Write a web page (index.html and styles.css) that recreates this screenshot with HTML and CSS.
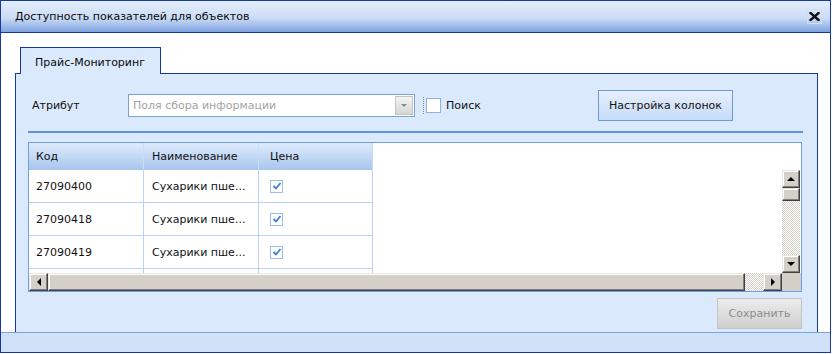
FILE: index.html
```html
<!DOCTYPE html>
<html lang="ru">
<head>
    <meta charset="UTF-8">
    <title>Доступность показателей для объектов</title>
    <link rel="stylesheet" href="styles.css">
</head>
<body>
    <div class="window">
        <div class="titlebar">
            <span class="title">Доступность показателей для объектов</span>
            <span class="close">
                <svg width="11" height="9" viewBox="0 0 11 9"><path d="M1.5 1 L9.5 8 M9.5 1 L1.5 8" stroke="#111" stroke-width="2.4" stroke-linecap="square"/></svg>
            </span>
        </div>
        <div class="body">
            <div class="tab-strip">
                <div class="tab active">Прайс-Мониторинг</div>
            </div>
            <div class="tab-panel">
                <div class="toolbar">
                    <span class="label">Атрибут</span>
                    <div class="combo">
                        <span class="combo-text">Поля сбора информации</span>
                        <span class="combo-btn"><i class="arrow-down"></i></span>
                    </div>
                    <label class="check">
                        <span class="box"></span>
                        <span>Поиск</span>
                    </label>
                    <button class="btn">Настройка колонок</button>
                </div>
                <div class="sep"></div>
                <div class="grid">
                    <div class="view">
                        <div class="row head">
                            <div class="cell c1">Код</div>
                            <div class="cell c2">Наименование</div>
                            <div class="cell c3">Цена</div>
                        </div>
                        <div class="row">
                            <div class="cell c1">27090400</div>
                            <div class="cell c2">Сухарики пше...</div>
                            <div class="cell c3"><span class="tick"><svg width="10" height="10" viewBox="0 0 10 10"><path d="M1.5 5 L4 7.5 L8.5 2" fill="none" stroke="#3b7fd8" stroke-width="1.8"/></svg></span></div>
                        </div>
                        <div class="row">
                            <div class="cell c1">27090418</div>
                            <div class="cell c2">Сухарики пше...</div>
                            <div class="cell c3"><span class="tick"><svg width="10" height="10" viewBox="0 0 10 10"><path d="M1.5 5 L4 7.5 L8.5 2" fill="none" stroke="#3b7fd8" stroke-width="1.8"/></svg></span></div>
                        </div>
                        <div class="row">
                            <div class="cell c1">27090419</div>
                            <div class="cell c2">Сухарики пше...</div>
                            <div class="cell c3"><span class="tick"><svg width="10" height="10" viewBox="0 0 10 10"><path d="M1.5 5 L4 7.5 L8.5 2" fill="none" stroke="#3b7fd8" stroke-width="1.8"/></svg></span></div>
                        </div>
                        <div class="row">
                            <div class="cell c1"></div>
                            <div class="cell c2"></div>
                            <div class="cell c3"></div>
                        </div>
                    </div>
                    <div class="vcol">
                        <div class="vspacer"></div>
                        <div class="vscroll">
                            <span class="sb-btn"><i class="tri up"></i></span>
                            <span class="sb-thumb v"></span>
                            <span class="sb-track"></span>
                            <span class="sb-btn"><i class="tri down"></i></span>
                        </div>
                    </div>
                    <div class="hscroll">
                        <span class="sb-btn h"><i class="tri left"></i></span>
                        <span class="sb-thumb h"></span>
                        <span class="sb-track"></span>
                        <span class="sb-btn h"><i class="tri right"></i></span>
                    </div>
                    <div class="corner"></div>
                </div>
                <div class="actions">
                    <button class="btn save" disabled>Сохранить</button>
                </div>
            </div>
        </div>
        <div class="footer"></div>
    </div>
</body>
</html>
```

FILE: styles.css
```css
*{
    margin:0;
    padding:0;
    box-sizing:border-box;
}
body{
    background:#fff;
    font-family:"DejaVu Sans", Verdana, sans-serif;
    font-size:11px;
    color:#111;
}
.window{
    width:831px;
    height:353px;
    border:1px solid #15399c;
    display:flex;
    flex-direction:column;
    background:#fff;
}
.titlebar{
    height:32px;
    border-bottom:1px solid #15399c;
    background:linear-gradient(#e4eefc, #cbdcf5 55%, #7ea3df);
    display:flex;
    align-items:center;
    padding:0 8px 0 14px;
}
.title{
    flex:1;
    color:#0a0a0a;
}
.close{
    width:15px;
    height:15px;
    border:1px solid #cfdff5;
    display:flex;
    align-items:center;
    justify-content:center;
}
.body{
    height:299px;
    padding:14px 12px 0 14px;
    display:flex;
    flex-direction:column;
}
.tab-strip{
    display:flex;
    padding-left:5px;
}
.tab{
    width:141px;
    height:27px;
    margin-bottom:-1px;
    position:relative;
    z-index:1;
    border:1px solid #15399c;
    border-bottom:none;
    background:#dbe9fc;
    padding:8px 0 0 14px;
    color:#0a0a0a;
}
.tab-panel{
    flex:1;
    background:#dbe9fc;
    border:1px solid #15399c;
    border-bottom:none;
    padding:16px 14px 0 12px;
}
.toolbar{
    height:30px;
    display:flex;
    align-items:center;
    padding-left:4px;
}
.label{
    width:96px;
}
.combo{
    width:287px;
    height:23px;
    border:1px solid #7ba1d6;
    background:#fff;
    display:flex;
    align-items:center;
    padding:1px;
}
.combo-text{
    flex:1;
    color:#a3a3a3;
    padding-left:3px;
}
.combo-btn{
    width:18px;
    height:19px;
    border:1px solid #c4c4c4;
    background:linear-gradient(#f4f4f4, #d6d6d6);
    display:flex;
    align-items:center;
    justify-content:center;
}
.arrow-down{
    border-left:3px solid transparent;
    border-right:3px solid transparent;
    border-top:3px solid #8a8a8a;
}
.check{
    width:175px;
    margin-left:8px;
    display:flex;
    align-items:center;
    gap:5px;
    border-left:1px dotted #8a8a8a;
    padding-left:2px;
    height:17px;
}
.box{
    width:15px;
    height:15px;
    border:1px solid #8fb2e3;
    background:#fff;
}
.btn{
    font-family:inherit;
    font-size:11px;
    color:#111;
    width:135px;
    height:31px;
    border:1px solid #6e9ad6;
    background:linear-gradient(#e6effc, #c6dbf6);
}
.sep{
    height:2px;
    background:#5c95dd;
    margin-top:11px;
}
.grid{
    margin-top:9px;
    width:774px;
    height:150px;
    border:1px solid #6f9fe2;
    background:#fff;
    display:grid;
    grid-template-columns:753px 19px;
    grid-template-rows:130px 18px;
}
.view{
    overflow:hidden;
}
.row{
    display:flex;
    height:33px;
    border-bottom:1px solid #bad2f3;
    width:344px;
}
.row.head{
    height:27px;
    border-bottom:none;
    background:linear-gradient(#dfebfc, #c4d9f5 50%, #a6c5ee);
}
.cell{
    border-right:1px solid #bad2f3;
    display:flex;
    align-items:center;
    padding-left:7px;
}
.head .cell{
    border-right-color:#c9dcf5;
}
.c1{ width:115px; }
.c2{ width:115px; padding-left:8px; }
.c3{ width:114px; padding-left:11px; }
.tick{
    width:13px;
    height:13px;
    border:1px solid #9dbde9;
    display:flex;
    align-items:center;
    justify-content:center;
}
.vcol{
    display:flex;
    flex-direction:column;
}
.vspacer{
    height:27px;
}
.vscroll{
    flex:1;
    display:flex;
    flex-direction:column;
    width:18px;
}
.hscroll{
    display:flex;
}
.sb-btn{
    width:18px;
    height:18px;
    background:#d4d0c8;
    border:1px solid;
    border-color:#e8e6e1 #404040 #404040 #e8e6e1;
    box-shadow:inset -1px -1px 0 #808080, inset 1px 1px 0 #fff;
    display:flex;
    align-items:center;
    justify-content:center;
}
.sb-btn.h{
    width:19px;
}
.sb-thumb{
    background:#d4d0c8;
    border:1px solid;
    border-color:#e8e6e1 #404040 #404040 #e8e6e1;
    box-shadow:inset -1px -1px 0 #808080, inset 1px 1px 0 #fff;
}
.sb-thumb.v{
    height:13px;
}
.sb-thumb.h{
    width:697px;
}
.sb-track{
    flex:1;
    background:repeating-conic-gradient(#d4d0c8 0 25%, #fff 0 50%) 0 0 / 2px 2px;
}
.tri{
    width:0;
    height:0;
}
.tri.up{
    border-left:4px solid transparent;
    border-right:4px solid transparent;
    border-bottom:4px solid #000;
}
.tri.down{
    border-left:4px solid transparent;
    border-right:4px solid transparent;
    border-top:4px solid #000;
}
.tri.left{
    border-top:4px solid transparent;
    border-bottom:4px solid transparent;
    border-right:4px solid #000;
}
.tri.right{
    border-top:4px solid transparent;
    border-bottom:4px solid transparent;
    border-left:4px solid #000;
}
.corner{
    background:#d4d0c8;
}
.actions{
    display:flex;
    justify-content:flex-end;
    margin-top:6px;
    padding-right:1px;
}
.save{
    width:85px;
    color:#8c8c8c;
    border-color:#c3c3c3;
    background:linear-gradient(#ececec, #cfcfcf);
}
.footer{
    height:20px;
    border-top:1px solid #7ba4e2;
    background:#cfe0f7;
}
```
